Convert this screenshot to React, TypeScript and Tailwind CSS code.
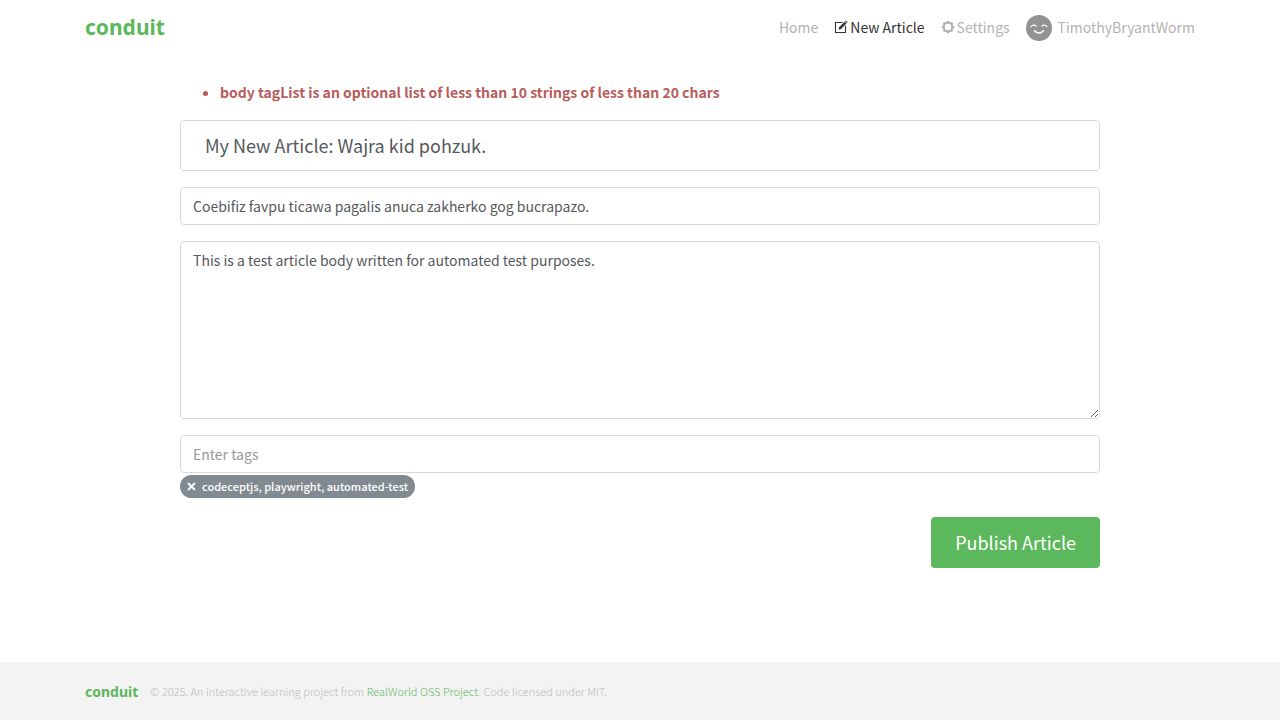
import { useState } from "react";

function ComposeIcon() {
  return (
    <svg viewBox="0 0 14 14" className="h-[14px] w-[14px]" fill="none" stroke="currentColor" aria-hidden="true">
      <path d="M8.500 2.500H1.500v10h10V5.800" strokeWidth="1.1" />
      <path d="M4.500 9.800l.6-2.600 5.500-5.500 1.900 1.900L7 9.100z" fill="currentColor" stroke="none" />
      <path d="M11.100 1.200l.8-.8 1.800 1.800-.8.800z" fill="currentColor" stroke="none" />
    </svg>
  );
}

const TEETH = [0, 45, 90, 135, 180, 225, 270, 315];

function GearIcon() {
  return (
    <svg viewBox="0 0 14 14" className="h-[14px] w-[14px]" fill="none" stroke="currentColor" aria-hidden="true">
      <circle cx="7" cy="7" r="4.200" strokeWidth="1.9" />
      {TEETH.map((a) => (
        <path key={a} d="M5.200 2.500L6.100.7h1.800l.9 1.800z" fill="currentColor" stroke="none" transform={`rotate(${a} 7 7)`} />
      ))}
    </svg>
  );
}

function Avatar() {
  return (
    <svg viewBox="0 0 26 26" className="h-[26px] w-[26px]" fill="none" stroke="#fff" strokeLinecap="round" aria-hidden="true">
      <circle cx="13" cy="13" r="13" fill="#929292" stroke="none" />
      <path d="M5 11.600q2.300-2.600 5-.6M15.900 11q2.700-2 5 .6" strokeWidth="1.300" />
      <path d="M8.600 15.900q4.400 4.200 8.800 0" strokeWidth="1.600" />
    </svg>
  );
}

const field =
  "block w-full rounded border border-[#d9d9d9] bg-white text-[#55595c] outline-none placeholder:text-[#999]";

export default function App() {
  const [tags, setTags] = useState(["codeceptjs, playwright, automated-test"]);
  return (
    <div className="flex min-h-screen flex-col bg-white font-['Noto_Sans_CJK_SC',sans-serif] text-[14px] leading-6">
      <nav className="mx-auto flex h-14 w-full max-w-[1140px] items-center justify-between px-[15px]">
        <a href="#home" className="pb-0.5 font-['Noto_Sans',sans-serif] text-[21px] font-bold leading-7 text-[#5cb85c]">
          conduit
        </a>
        <ul className="flex items-center gap-4 text-[#b2b2b2]">
          <li><a href="#home" className="block pb-0.5">Home</a></li>
          <li>
            <a href="#editor" className="flex items-center gap-0.5 pb-0.5 text-[#333]"><ComposeIcon />New Article</a>
          </li>
          <li>
            <a href="#settings" className="flex items-center gap-0.5 pb-0.5"><GearIcon />Settings</a>
          </li>
          <li>
            <a href="#profile" className="flex items-center gap-1.5"><Avatar /><span className="pb-0.5">TimothyBryantWorm</span></a>
          </li>
        </ul>
      </nav>

      <main className="mx-auto w-full max-w-[950px] px-[15px] pt-6 pb-8">
        <ul className="mb-4 list-disc pl-10 font-bold text-[#b85c5c]">
          <li>body tagList is an optional list of less than 10 strings of less than 20 chars</li>
        </ul>
        <form onSubmit={(e) => e.preventDefault()} className="flex flex-col gap-4">
          <input aria-label="Article title" defaultValue="My New Article: Wajra kid pohzuk." className={`${field} h-[51px] px-6 pb-0.5 text-[18px]`} />
          <input aria-label="Article description" defaultValue="Coebifiz favpu ticawa pagalis anuca zakherko gog bucrapazo." className={`${field} h-[38px] px-3`} />
          <textarea aria-label="Article body" rows={8} defaultValue="This is a test article body written for automated test purposes." className={`${field} h-[178px] resize-y px-3 py-1.5`} />
          <div>
            <input aria-label="Tags" placeholder="Enter tags" className={`${field} h-[38px] px-3`} />
            <div className="mt-0.5 flex min-h-6 flex-wrap gap-1">
              {tags.map((tag) => (
                <span key={tag} className="flex h-[23px] items-center gap-1.5 rounded-full bg-[#818a91] px-[7px] text-[11px] font-medium text-white">
                  <button type="button" aria-label={`Remove ${tag}`} onClick={() => setTags(tags.filter((t) => t !== tag))}>
                    <svg viewBox="0 0 9 9" className="h-[9px] w-[9px]" stroke="currentColor" strokeWidth="1.800" aria-hidden="true">
                      <path d="M1 1l7 7M8 1l-7 7" />
                    </svg>
                  </button>
                  <span className="pb-0.5">{tag}</span>
                </span>
              ))}
            </div>
          </div>
          <button type="submit" className="mt-0.5 h-[51px] self-end rounded bg-[#5cb85c] px-6 pb-0.5 text-[18px] text-white">
            Publish Article
          </button>
        </form>
      </main>

      <footer className="mt-auto bg-[#f3f3f3]">
        <div className="mx-auto flex h-[58px] w-full max-w-[1140px] items-center gap-3 px-[15px]">
          <a href="#home" className="pt-0.5 font-['Noto_Sans',sans-serif] text-[14px] font-bold text-[#5cb85c]">conduit</a>
          <p className="text-[11px] font-light text-[#bbb]">
            © 2025. An interactive learning project from{" "}
            <a href="#project" className="text-[#5cb85c]">RealWorld OSS Project</a>. Code licensed under MIT.
          </p>
        </div>
      </footer>
    </div>
  );
}
